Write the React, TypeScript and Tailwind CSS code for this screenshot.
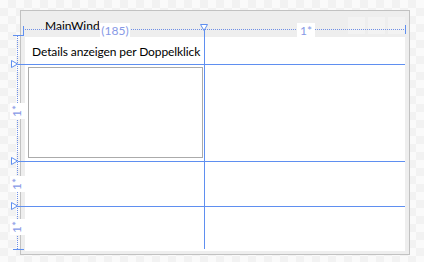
const BLUE = "#5f8ff0";
const DOT = "#6e8fe6";

const TopLabel = ({ x, w, text }: { x: number; w: number; text: string }) => (
  <span
    className="absolute top-[23px] h-[14px] pt-[2px] bg-white text-[12px] leading-[12px] text-[#8799e6] text-center"
    style={{ left: x, width: w }}
  >
    {text}
  </span>
);

const SideLabel = ({ y }: { y: number }) => (
  <span
    className="absolute left-[10px] w-[15px] h-[16px] bg-white flex items-center justify-center"
    style={{ top: y }}
  >
    <span className="-rotate-90 text-[12px] leading-none text-[#8799e6]">1*</span>
  </span>
);

const Adorners = () => (
  <svg className="absolute inset-0 pointer-events-none" width={424} height={262}>
    <g stroke={DOT} strokeWidth={1} strokeDasharray="1 1" fill="none">
      <line x1={25} y1={29.5} x2={405} y2={29.5} />
      <line x1={17.5} y1={36} x2={17.5} y2={249} />
    </g>
    <g stroke={BLUE} strokeWidth={1} fill="none">
      <path d="M13 35.5H24M23.5 26V36" />
      <path d="M13 249.5H24" />
      <path d="M405.5 25V34" />
      <path d="M204.5 30V249" />
      <path d="M18 64.5H405M18 161.5H405M18 206.5H405" />
      <path d="M200.5 24.5H207.5L204 30.5Z" fill="#fff" />
      <path d="M11.5 60.5V67.5L17.5 64Z" fill="#fff" />
      <path d="M11.5 157.5V164.5L17.5 161Z" fill="#fff" />
      <path d="M11.5 202.5V209.5L17.5 206Z" fill="#fff" />
    </g>
  </svg>
);

export default function App() {
  return (
    <div
      className="relative w-[424px] h-[262px] overflow-hidden pt-[10px] pl-[20px] bg-[repeating-conic-gradient(#f2f2f2_0_25%,#fafafa_0_50%)] bg-[length:16px_16px] text-black"
      style={{ fontFamily: 'Lato, "Liberation Sans", sans-serif' }}
    >
      <div className="w-[390px] h-[245px] border border-[#c2c2c2] bg-[#eeeeee] flex flex-col">
        <div className="h-[26px] flex items-start pl-[24px] pr-[4px]">
          <span className="mt-[7px] w-[54px] overflow-hidden whitespace-nowrap text-[12px] leading-[16px]">
            MainWindow
          </span>
          <div className="ml-auto mt-[6px] flex gap-[3px]">
            <div className="w-[17px] h-[17px] bg-[#f3f3f3]" />
            <div className="w-[17px] h-[17px] bg-[#f3f3f3]" />
            <div className="w-[17px] h-[17px] bg-[#f3f3f3]" />
          </div>
        </div>
        <div className="flex-1 mx-[4px] mb-[3px] bg-white grid grid-cols-[179px_1fr] grid-rows-[27px_97px_45px_1fr]">
          <div className="pl-[7px] pt-[7px] text-[12px] leading-[16px] whitespace-nowrap tracking-[-0.1px]">
            Details anzeigen per Doppelklick
          </div>
          <div />
          <div className="pl-[3px] pt-[3px] pr-[1px] pb-[3px]">
            <div className="w-full h-full border border-[#ababab]" />
          </div>
          <div />
        </div>
      </div>
      <Adorners />
      <TopLabel x={100} w={30} text="(185)" />
      <TopLabel x={297} w={18} text="1*" />
      <SideLabel y={103} />
      <SideLabel y={176} />
      <SideLabel y={219} />
    </div>
  );
}
